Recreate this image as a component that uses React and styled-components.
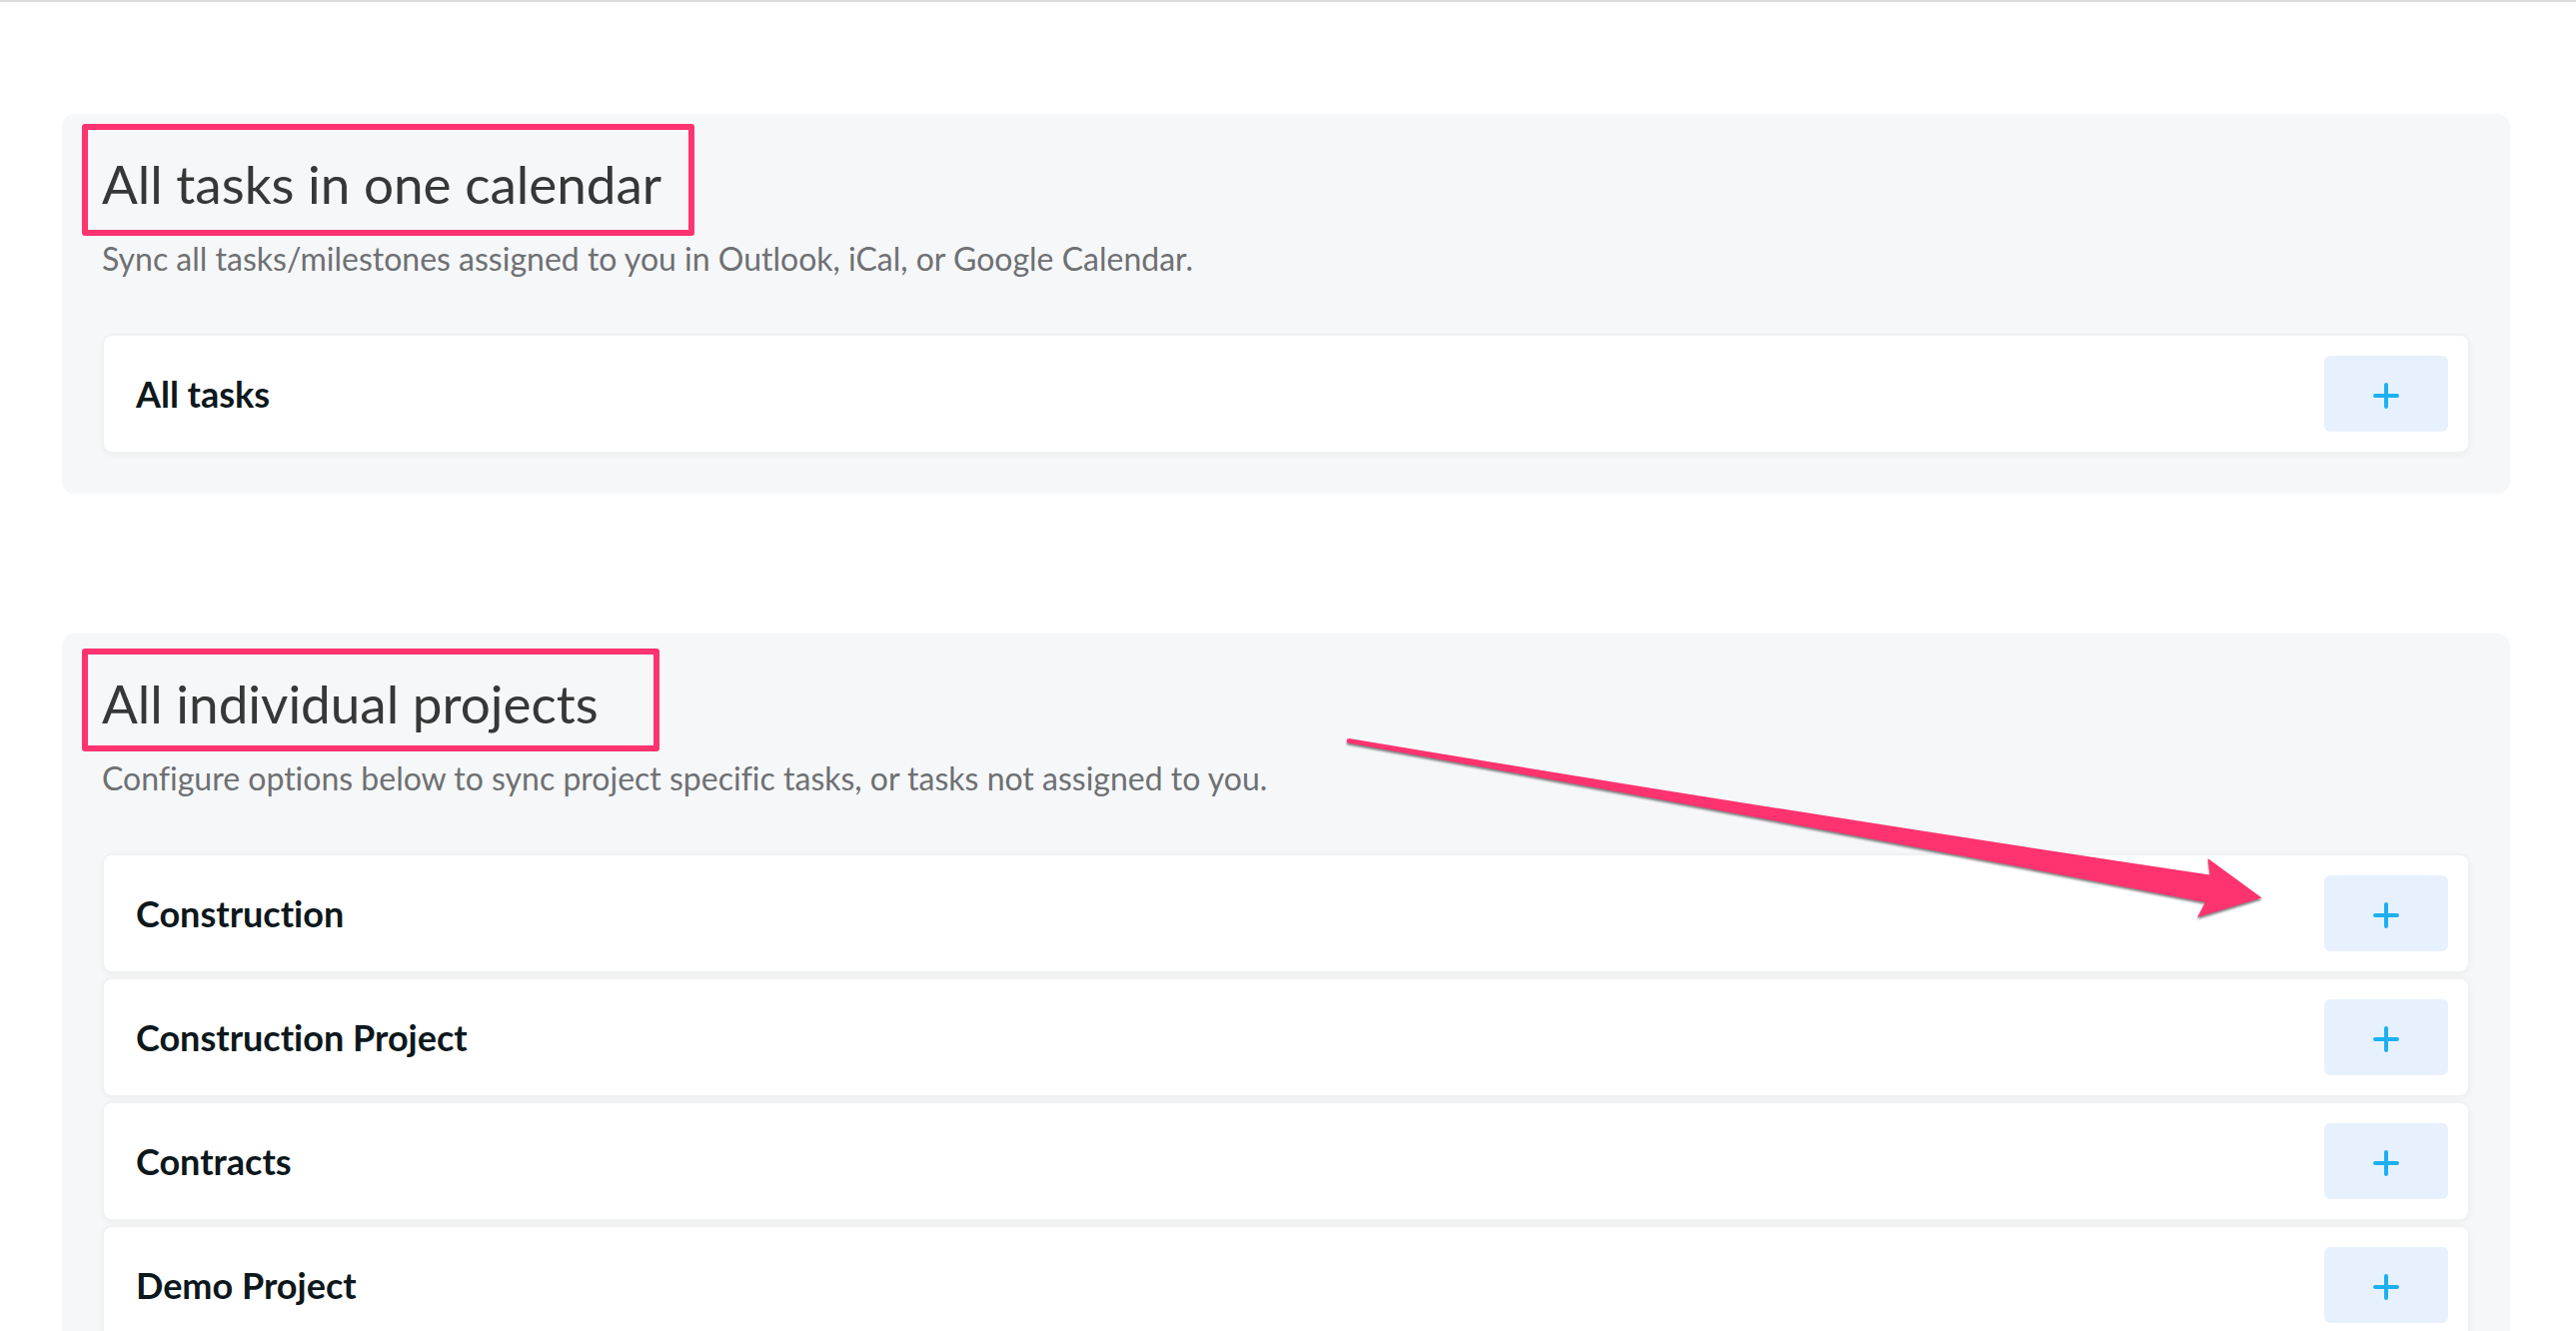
import React from "react";
import styled, { createGlobalStyle } from "styled-components";

const GlobalStyle = createGlobalStyle`
  * { box-sizing: border-box; }
  body {
    margin: 0;
    background: #fff;
    font-family: Lato, "Open Sans", sans-serif;
    font-variant-ligatures: none;
  }
`;

const accent = "#ff336f";

const Page = styled.main`
  display: flex;
  flex-direction: column;
  gap: 140px;
  height: 100vh;
  overflow: hidden;
  padding: 112px 66px 0 62px;
  border-top: 2px solid #dcdcdc;
`;

const Panel = styled.section`
  position: relative;
  flex: none;
  padding: 40px;
  border-radius: 12px;
  background: #f5f7f9;
`;

const Heading = styled.h2`
  margin: 0;
  font-size: 53px;
  line-height: 60px;
  font-weight: 400;
  color: #373737;
`;

const Description = styled.p`
  margin: 25px 0 55px;
  font-size: 32px;
  line-height: 40px;
  color: #6f7072;
`;

const List = styled.ul`
  display: flex;
  flex-direction: column;
  gap: 8px;
  margin: 0;
  padding: 2px;
  list-style: none;
`;

const Row = styled.li`
  display: flex;
  align-items: center;
  justify-content: space-between;
  padding: 20px 20px 20px 32px;
  border-radius: 8px;
  background: #fff;
  box-shadow: 0 0 0 2px #f0f1f1, 0 2px 8px rgba(0, 0, 0, 0.06);
`;

const RowTitle = styled.span`
  font-size: 36px;
  line-height: 40px;
  font-weight: 700;
  color: #0d181c;
`;

const AddButton = styled.button`
  display: flex;
  align-items: center;
  justify-content: center;
  width: 124px;
  height: 76px;
  padding: 4px 0 0;
  border: 0;
  border-radius: 6px;
  background: #e7f1fe;
  color: #1db0f1;
  cursor: pointer;
`;

const Highlight = styled.div`
  position: absolute;
  top: ${(p) => p.$top}px;
  left: 20px;
  width: ${(p) => p.$width}px;
  height: ${(p) => p.$height}px;
  border: 6px solid ${accent};
  border-radius: 3px;
  pointer-events: none;
`;

const Arrow = styled.svg`
  position: absolute;
  top: 101px;
  right: 244px;
  overflow: visible;
  pointer-events: none;
  filter: drop-shadow(0 2px 1px rgba(0, 0, 0, 0.5));
`;

const sections = [
  {
    title: "All tasks in one calendar",
    text: "Sync all tasks/milestones assigned to you in Outlook, iCal, or Google Calendar.",
    rows: ["All tasks"],
    mark: { $top: 10, $width: 613, $height: 112 },
  },
  {
    title: "All individual projects",
    text: "Configure options below to sync project specific tasks, or tasks not assigned to you.",
    rows: ["Construction", "Construction Project", "Contracts", "Demo Project"],
    mark: { $top: 15, $width: 578, $height: 103 },
    arrow: true,
  },
];

function PlusIcon() {
  return (
    <svg width="28" height="28" viewBox="0 0 28 28" aria-hidden="true">
      <path d="M14 3v22M3 14h22" stroke="currentColor" strokeWidth="4" strokeLinecap="round" />
    </svg>
  );
}

function PointerArrow() {
  return (
    <Arrow width="924" height="190" viewBox="1344 735 924 190" aria-hidden="true">
      <path
        fill={accent}
        d="M1350 739Q1780 811 2211.5 875.5L2209.5 859L2263.5 898.5L2199 918L2207 903Q1780 820.5 1349 743.5A2.4 2.4 0 0 1 1350 739Z"
      />
    </Arrow>
  );
}

export default function App() {
  return (
    <>
      <GlobalStyle />
      <Page>
        {sections.map((section) => (
          <Panel key={section.title}>
            <Heading>{section.title}</Heading>
            <Description>{section.text}</Description>
            <List>
              {section.rows.map((name) => (
                <Row key={name}>
                  <RowTitle>{name}</RowTitle>
                  <AddButton type="button" aria-label={`Add ${name}`}>
                    <PlusIcon />
                  </AddButton>
                </Row>
              ))}
            </List>
            <Highlight {...section.mark} />
            {section.arrow && <PointerArrow />}
          </Panel>
        ))}
      </Page>
    </>
  );
}
